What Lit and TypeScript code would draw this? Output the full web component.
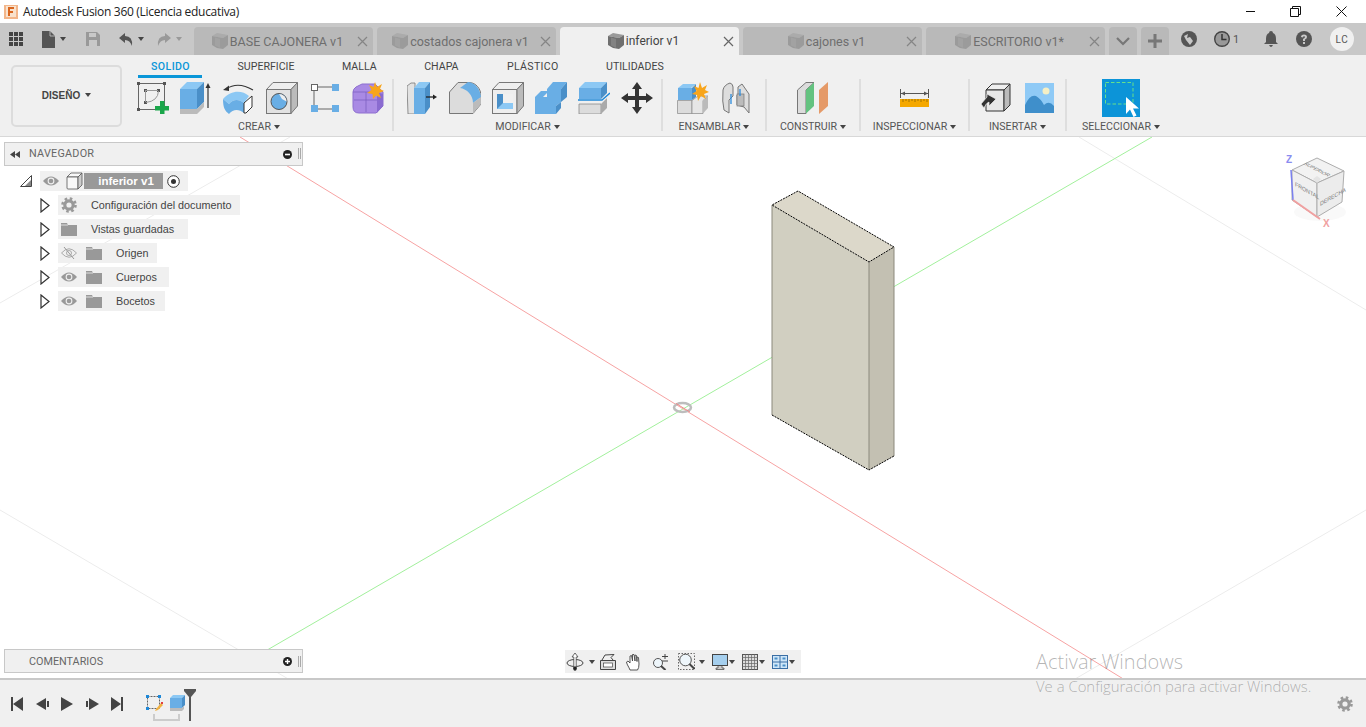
import { LitElement, html, css } from "lit";
import { customElement } from "lit/decorators.js";

const B1 = "#8cc8f4", B2 = "#69aee5", B3 = "#4a8fc8";

const gear = (s: number, c = "#999") => html`<svg width=${s} height=${s} viewBox="0 0 16 16"><circle cx="8" cy="8" r="4.2" fill="none" stroke=${c} stroke-width="3.2"/><circle cx="8" cy="8" r="6.5" fill="none" stroke=${c} stroke-width="2.6" stroke-dasharray="2.55 2.55"/></svg>`;
const eye = html`<svg width="16" height="12" viewBox="0 0 16 12"><path d="M0 6Q8-3 16 6Q8 15 0 6Z" fill="#999"/><circle cx="8" cy="6" r="3.4" fill="#f0f0f0"/><circle cx="8" cy="6" r="2.3" fill="#999"/></svg>`;
const eyeOff = html`<svg width="16" height="12" viewBox="0 0 16 12"><path d="M.5 6Q8-2.5 15.500 6Q8 14.500 .5 6Z" fill="none" stroke="#aaa"/><circle cx="8" cy="6" r="2.500" fill="none" stroke="#aaa"/><path d="M3 0L13 12" stroke="#999"/></svg>`;
const folder = html`<svg width="16" height="13" viewBox="0 0 16 13"><path d="M0 0H6L7 2H16V13H0Z" fill="#999"/><path d="M0 2H7" stroke="#f0f0f0" stroke-width=".8"/></svg>`;
const arrow = html`<svg width="10" height="15" viewBox="0 0 10 15"><path d="M1 1L9 7.500L1 14Z" fill="#fff" stroke="#333" stroke-width="1.200"/></svg>`;
const tabCube = (c: string, l: string) => html`<svg width="16" height="16" viewBox="0 0 16 16"><path d="M0 3L5 0L16 2L11 5Z" fill=${l}/><path d="M0 3L11 5V16L5 15L0 12Z" fill=${c}/><path d="M11 5L16 2V12L11 16Z" fill=${c}/><path d="M3 4.500V12.500L8 15V6Z" fill=${l} opacity=".45"/></svg>`;

const icons = {
  sketch: html`<svg width="32" height="32" viewBox="0 0 32 32"><rect x="1.500" y="1.500" width="26" height="26" fill="none" stroke="#666"/><g fill="#555"><rect width="3" height="3"/><rect x="26" width="3" height="3"/><rect y="26" width="3" height="3"/><rect x="7" y="7" width="3" height="3"/><rect x="20" y="7" width="3" height="3"/><rect x="7" y="19" width="3" height="3"/></g><path d="M8.500 8V20M9 8.500H21M21.500 9Q21 19 9 20.500" fill="none" stroke="#999"/><path d="M23 19h4.500v5h5v4.500h-5v4h-4.500v-4h-5V24h5z" fill="#1aa64a"/></svg>`,
  extrude: html`<svg width="32" height="32" viewBox="0 0 32 32"><path d="M0 7L7 0H24L17 7Z" fill=${B1}/><rect y="7" width="17" height="20" fill=${B2}/><path d="M17 7L24 0V20L17 27Z" fill=${B3}/><path d="M0 27H17L24 20V25L17 32H0Z" fill="#bbb"/><path d="M28 26V4" stroke="#333" stroke-width="1.200"/><path d="M25.500 6L28 1L30.500 6Z" fill="#333"/></svg>`,
  revolve: html`<svg width="34" height="32" viewBox="0 0 34 32"><path d="M4 7Q16 -1 31 8" fill="none" stroke="#333" stroke-width="1.200"/><path d="M1 8L7 3.500L7 9Z" fill="#333"/><path d="M1 17C9 8 20 8 27 14L22 21C17 17 11 17 7 22Z" fill=${B1}/><path d="M1 17L7 22C11 17 17 17 22 21V31C17 27 11 27 7 32C3 29 1 26 1 17Z" fill=${B2}/><path d="M22 21L30 14V25L24 31H22Z" fill="#fff" stroke="#333"/></svg>`,
  hole: html`<svg width="32" height="32" viewBox="0 0 32 32"><path d="M.5 7.500L7 .5H31.500L25 7.500Z" fill="#eee" stroke="#777"/><rect x=".5" y="7.500" width="24.500" height="24" fill="#e2e2e2" stroke="#777"/><path d="M25 7.500L31.500 .5V24L25 31.500Z" fill="#bbb" stroke="#777"/><circle cx="13" cy="19.500" r="8" fill=${B2} stroke="#555"/><path d="M13 12A7.500 7.500 0 0 1 20.500 19.500L16 17Z" fill="#eee"/></svg>`,
  nodes: html`<svg width="28" height="30" viewBox="0 0 28 30"><path d="M6 4H22M3 7V23M6 26H22" stroke="#666" fill="none"/><rect x=".5" y="1.500" width="6" height="6" fill="#fff" stroke="#666"/><rect x="21" y="1" width="7" height="7" fill=${B2}/><rect y="22" width="7" height="7" fill=${B2}/><rect x="21" y="22" width="7" height="7" fill=${B2}/></svg>`,
  star: html`<svg width="32" height="32" viewBox="0 0 32 32"><path d="M1 10Q1 7 4 5L10 2H23L31 10V24L24 31H7Q1 31 1 25Z" fill="#a98ae4" stroke="#8d6fcf"/><path d="M2 18H25M14 10V30M1 10H24" stroke="#7d5fc0" fill="none" opacity=".8"/><path d="M25 10V31L31 24V12Z" fill="#8a6bd0"/><path d="M23 0L25 5L30 2L28 7L32 9L27 11L29 16L24 13.500L21 17L20.500 12L15 11L19.500 8L17 3L21.500 5Z" fill="#f8a51b"/></svg>`,
  press: html`<svg width="30" height="32" viewBox="0 0 30 32"><path d="M0 4L4 1H8V32H1Z" fill="#e2e2e2" stroke="#777" stroke-width=".8"/><path d="M7 6L12 0H23L18 6Z" fill=${B1}/><rect x="7" y="6" width="11" height="26" fill=${B2}/><path d="M18 6L23 0V25L18 32Z" fill=${B3}/><path d="M19 15H27" stroke="#222" stroke-width="1.300"/><path d="M26 12.500L30 15L26 17.500Z" fill="#222"/></svg>`,
  fillet: html`<svg width="32" height="32" viewBox="0 0 32 32"><path d="M.5 10L9 .5H20C27 .5 32 7 32 14V22L24 31.500H.5Z" fill="#dcdcdc" stroke="#777"/><path d="M11 6L19 0C27 1 31 7 32 15L24 21C24 13 18 7 11 6Z" fill=${B2}/><path d="M24 21L32 15V22L24 31.500Z" fill="#bbb"/></svg>`,
  shell: html`<svg width="32" height="32" viewBox="0 0 32 32"><path d="M.5 7.500L7 .5H31.500L25 7.500Z" fill="#eee" stroke="#777"/><rect x=".5" y="7.500" width="24.500" height="24" fill="#eee" stroke="#777"/><path d="M25 7.500L31.500 .5V24L25 31.500Z" fill="#bbb" stroke="#777"/><rect x="5" y="12" width="16" height="15" fill=${B1}/><path d="M5 12H11V21L5 27Z" fill=${B3}/><path d="M11 12H21V21H11Z" fill="#f0f0f0"/></svg>`,
  combine: html`<svg width="32" height="32" viewBox="0 0 32 32"><path d="M0 15L6 9H14L8 15Z" fill=${B2}/><path d="M12 7L18 0H32L26 7Z" fill=${B2}/><path d="M0 15H12V7H26V20L21 24V32H0Z" fill=${B2}/><path d="M26 7L32 0V15L26 20Z" fill=${B3}/><path d="M21 24L26 20V26L21 32Z" fill=${B3}/></svg>`,
  offset: html`<svg width="32" height="32" viewBox="0 0 32 32"><path d="M1 6L7 0H29L23 6Z" fill=${B1}/><rect x="1" y="6" width="22" height="11" fill=${B2}/><path d="M23 6L29 0V11L23 17Z" fill=${B3}/><path d="M0 18H24L32 11" fill="none" stroke="#1e88d8" stroke-width="1.400"/><path d="M1 22H23V32H1Z" fill="#dcdcdc" stroke="#888" stroke-width=".8"/><path d="M23 22L29 16V26L23 32Z" fill="#aaa"/></svg>`,
  move: html`<svg width="32" height="32" viewBox="0 0 32 32"><path d="M16 0L21 7H18V14H25V11L32 16L25 21V18H18V25H21L16 32L11 25H14V18H7V21L0 16L7 11V14H14V7H11Z" fill="#333"/></svg>`,
  comp: html`<svg width="32" height="32" viewBox="0 0 32 32"><path d="M1 6L6 2H19L14 6Z" fill=${B1}/><rect x="1" y="6" width="14" height="12" fill=${B2}/><path d="M15 6L19 2V15L15 18Z" fill=${B3}/><path d="M.5 18.500H15V31.500H.5Z" fill="#dcdcdc" stroke="#888" stroke-width=".7"/><path d="M15 18.500L21 14H31L26 18.500V31.500H15Z" fill="#e6e6e6" stroke="#888" stroke-width=".7"/><path d="M26 18.500L31 14V26L26 31.500Z" fill="#bbb"/><path d="M23 0L25 6L30 3L28 8L32 10L27 12L29 17L24 14L21 19L20 13L15 12L19.500 9L17 4L21.500 6Z" fill="#f8a51b"/></svg>`,
  joint: html`<svg width="28" height="32" viewBox="0 0 28 32"><path d="M1 8Q2 3 8 1Q11 2 11 5V14L7 18V31L2 28Q0 20 1 8Z" fill="#ddd" stroke="#777"/><path d="M27 12L20 2L16 5V13H15V23L22 25L27 31Z" fill="#ddd" stroke="#777"/><rect x="15" y="12" width="7" height="12" fill="#bbb" stroke="#777" stroke-width=".7"/><path d="M9 12V22M18 7V14" stroke="#2b8cdc" stroke-width="1.300"/></svg>`,
  plane: html`<svg width="32" height="32" viewBox="0 0 32 32"><path d="M.5 8L9 .5H17L9 8V31.500H.5Z" fill="#dcdcdc" stroke="#777"/><path d="M9 8L17 .5V24L9 31.500Z" fill="#63c27f"/><path d="M22 8L31 0V24L22 32Z" fill="#e59a68"/></svg>`,
  measure: html`<svg width="29" height="18" viewBox="0 0 29 18"><path d="M.5 0V9M28.500 0V9M1 4.500H28" stroke="#555"/><path d="M1 4.500L5 2.500V6.500ZM28 4.500L24 2.500V6.500Z" fill="#555"/><rect y="10" width="29" height="8" fill="#f5a800"/><path d="M3 10v3M6 10v2M9 10v3M12 10v2M15 10v3M18 10v2M21 10v3M24 10v2M27 10v3" stroke="#805c00" stroke-width=".7"/></svg>`,
  insert: html`<svg width="30" height="30" viewBox="0 0 30 30"><path d="M5 7L11 1H29L23 7Z" fill="#eee" stroke="#333"/><path d="M5 7H23V28H5Z" fill="#e8e8e8" stroke="#333"/><path d="M23 7L29 1V22L23 28Z" fill="#bbb" stroke="#333"/><path d="M0 21L6 14V11L15 16L8 23V19Q5 20 3 25Z" fill="#333" stroke="#eee" stroke-width=".7"/></svg>`,
  image: html`<svg width="29" height="30" viewBox="0 0 29 30"><rect width="29" height="30" fill="#8fcaf6"/><circle cx="21" cy="8" r="3.500" fill="#f5efc5"/><path d="M0 22Q5 11 11 13Q16 16 19 22Q24 17 29 23V30H0Z" fill="#3f8fcb"/></svg>`,
  select: html`<svg width="38" height="38" viewBox="0 0 38 38"><rect width="38" height="38" fill="#0c94d8"/><rect x="3.500" y="3.500" width="27.500" height="21.500" fill="none" stroke="#67e08a" stroke-dasharray="3.500 2"/><path d="M24 18V35L28 30.500L31.500 38L34.500 36.500L31 29.500L37 29.500Z" fill="#fff"/></svg>`,
};

const navIcons = {
  orbit: html`<svg width="18" height="18" viewBox="0 0 18 18"><ellipse cx="9" cy="10" rx="8" ry="3.500" fill="none" stroke="#444"/><path d="M9 0L12 4H10.200V17H7.800V4H6Z" fill="#fff" stroke="#444" stroke-width=".8"/><path d="M9 13L11 15L9 18L7 15Z" fill="#222"/></svg>`,
  look: html`<svg width="16" height="16" viewBox="0 0 16 16"><path d="M.5 6.500H15.500V15.500H.5Z" fill="#ddd" stroke="#444"/><rect x="3.500" y="9" width="9" height="4" fill="#fff" stroke="#444" stroke-width=".7"/><path d="M2 6L5 1L14 .5L11 3.500L13 6" fill="none" stroke="#444"/></svg>`,
  hand: html`<svg width="16" height="18" viewBox="0 0 16 18"><path d="M4 17C3 14 1 12 .5 9L2 8L4 10V3L5.500 2.500L6.500 8V1.500H8L9 8V2L10.500 2.500L11 8.500V4L12.500 4.500L13 11Q13 15 11.500 17Z" fill="#fff" stroke="#444" stroke-width=".9"/></svg>`,
  zoom: html`<svg width="16" height="16" viewBox="0 0 16 16"><circle cx="6" cy="9" r="4.500" fill="#eef6fb" stroke="#555"/><path d="M9 12L13.500 16" stroke="#444" stroke-width="2"/><path d="M10 2.500H16M13 0V5M10 7H16" stroke="#444"/></svg>`,
  fit: html`<svg width="17" height="17" viewBox="0 0 17 17"><rect x=".5" y=".5" width="16" height="16" fill="none" stroke="#666" stroke-dasharray="1.500 1.500"/><circle cx="7.500" cy="7" r="5.800" fill="#eef6fb" stroke="#555"/><path d="M11.500 11L16.500 16" stroke="#444" stroke-width="2"/></svg>`,
  display: html`<svg width="16" height="16" viewBox="0 0 16 16"><rect x=".5" y=".5" width="15" height="11" fill="#a5cfee" stroke="#444"/><path d="M6 12V14H4V15.500H12V14H10V12" fill="#ccc" stroke="#444" stroke-width=".7"/></svg>`,
  grid: html`<svg width="16" height="16" viewBox="0 0 16 16"><rect x=".5" y=".5" width="15" height="15" fill="#ddd" stroke="#555"/><path d="M3.500 0V16M6.500 0V16M9.500 0V16M12.500 0V16M0 3.500H16M0 6.500H16M0 9.500H16M0 12.500H16" stroke="#666" stroke-width=".7"/></svg>`,
  views: html`<svg width="16" height="14" viewBox="0 0 16 14"><rect x=".5" y=".5" width="15" height="13" fill="#cfe6f8" stroke="#3a6ea5"/><path d="M8 0V14M0 7H16" stroke="#3a6ea5"/><path d="M2.500 3.500H5.500M10.500 3.500H13.500M2.500 10.500H5.500M10.500 10.500H13.500" stroke=${B3} stroke-width="2"/></svg>`,
};

@customElement("app-root")
export class AppRoot extends LitElement {
  static styles = css`
    :host { display: block; width: 1366px; height: 727px; overflow: hidden; }
    * { box-sizing: border-box; }
    svg { display: block; flex: none; }
    .app { position: relative; display: flex; flex-direction: column; width: 1366px; height: 727px; background: #fff; font-family: Roboto, "Liberation Sans", sans-serif; color: #444; }
    .caret { flex: none; width: 0; height: 0; border-left: 3.5px solid transparent; border-right: 3.5px solid transparent; border-top: 4px solid #444; }
    .caret.l { border-top-color: #999; }

    .title { display: flex; align-items: center; height: 23px; flex: none; padding-left: 4px; background: #fff; }
    .title .t { margin-left: 5px; font-size: 12px; color: #222; font-family: "Open Sans", sans-serif; letter-spacing: -.3px; white-space: nowrap; }
    .win { margin-left: auto; display: flex; padding-right: 2px; }
    .win div { width: 45.500px; display: flex; justify-content: center; }

    .tabbar { display: flex; height: 32px; flex: none; background: #c8c8c8; align-items: flex-end; }
    .tools { width: 194px; height: 32px; flex: none; display: flex; align-items: center; padding-left: 9px; }
    .tabs { display: flex; gap: 4px; }
    .tab { width: 179px; height: 28px; display: flex; align-items: center; background: #b9b9b9; border-radius: 4px 4px 0 0; padding: 0 5px 0 4px; font-size: 12.500px; color: #6e6e6e; }
    .tab.on { background: #f0f0f0; color: #444; font-size: 12px; }
    .tab .lab { flex: 1; display: flex; align-items: center; justify-content: center; gap: 2px; white-space: nowrap; }
    .tab .x { width: 11px; height: 11px; flex: none; }
    .mini { height: 28px; width: 28px; flex: none; background: #b9b9b9; border-radius: 4px 4px 0 0; display: flex; align-items: center; justify-content: center; }
    .tstatus { display: flex; align-items: center; height: 32px; margin-left: 12px; flex: 1; padding-right: 12px; }

    .toolbar { display: flex; height: 82px; flex: none; background: #f0f0f0; border-bottom: 1px solid #d8d8d8; padding-left: 11px; }
    .design { width: 111px; height: 62px; margin-top: 10px; padding-bottom: 2px; flex: none; border: 2px solid #dcdcdc; border-radius: 5px; display: flex; align-items: center; justify-content: center; gap: 5px; font: bold 10px "Liberation Sans", sans-serif; color: #444; }
    .rib { margin-left: 4px; display: flex; flex-direction: column; }
    .rtabs { display: flex; flex: none; gap: 47.500px; padding: 6px 0 0 25px; height: 24px; font-size: 10.600px; color: #444; line-height: 12px; }
    .rtabs span { position: relative; white-space: nowrap; }
    .rtabs .on { color: #0a96d8; font-weight: 500; letter-spacing: .4px; }
    .rtabs .on::after { content: ""; position: absolute; left: -13px; right: -12px; top: 14px; height: 3px; background: #0a96d8; }
    .rtabs .pl { margin-left: 1px; letter-spacing: .3px; }
    .groups { display: flex; height: 57px; flex: none; }
    .grp { display: flex; flex-direction: column; align-items: center; height: 57px; }
    .grp::after { content: none; }
    .sep { border-right: 2px solid #dedede; height: 52px; }
    .irow { display: flex; align-items: center; height: 38px; flex: none; }
    .irow.s1 { padding-left: 2px; }
    .irow.s2 { padding-left: 4px; }
    .cell { width: 43px; display: flex; justify-content: center; }
    .glab { display: flex; align-items: center; gap: 3px; margin-top: 4px; height: 12px; flex: none; font-size: 10.600px; line-height: 12px; color: #555; white-space: nowrap; }

    .canvas { position: relative; flex: 1; display: flex; flex-direction: column; justify-content: space-between; padding: 5px 0 5px 4px; overflow: hidden; }
    .scene { position: absolute; left: 0; top: 0; }
    .top, .panel { position: relative; }
    .panel { width: 299px; height: 24px; display: flex; align-items: center; background: #f0f0f0; border: 1px solid #c8c8c8; font-size: 10.800px; color: #666; padding-left: 24px; }
    .panel.nav { letter-spacing: .25px; padding-bottom: 2px; }
    .panel .rw { position: absolute; left: 5px; top: 8px; }
    .panel .sign { margin-left: auto; margin-right: 6px; }
    .panel.nav .sign { margin-top: 2px; }
    .panel .grip { width: 3px; height: 11px; border: 1px solid #aaa; border-top: none; border-bottom: none; margin-right: 1px; background: #f0f0f0; }

    .tree { display: flex; flex-direction: column; gap: 4px; margin-top: 5px; align-items: flex-start; }
    .rroot { display: flex; align-items: center; margin-left: 16px; height: 20px; }
    .rootchip { display: flex; align-items: center; height: 20px; width: 148px; margin-left: 8px; background: #f0f0f0; padding-left: 3px; }
    .comp { display: flex; align-items: center; width: 98px; height: 16px; margin-left: 6px; background: #999; }
    .comp .box { width: 19px; height: 20px; display: flex; align-items: center; justify-content: center; flex: none; background: #f0f0f0; }
    .comp .nm { flex: 1; text-align: center; padding-left: 5px; color: #fff; font: bold 11.500px "Liberation Sans", sans-serif; }
    .rootchip .rad { margin-left: 4px; }
    .row { display: flex; align-items: center; height: 20px; margin-left: 36px; }
    .chip { display: flex; align-items: center; height: 20px; margin-left: 8px; background: #f0f0f0; padding: 0 0 0 3px; font: 10.800px "Liberation Sans", sans-serif; color: #444; }
    .chip .ic { width: 16px; display: flex; justify-content: center; flex: none; }
    .chip .ic + .ic { margin-left: 9px; }
    .chip .tx { margin-left: 14px; white-space: nowrap; }

    .navbar { position: absolute; left: 565px; bottom: 5px; width: 236px; height: 23px; background: #f0f0f0; display: flex; align-items: center; padding-left: 1px; }
    .navbar .n { display: flex; align-items: center; }
    .ml1 { margin-left: 1px; } .ml4 { margin-left: 4px; } .ml5 { margin-left: 5px; } .ml7 { margin-left: 7px; } .ml10 { margin-left: 10px; }

    .bottom { height: 49px; flex: none; background: #f0f0f0; border-top: 2px solid #c8c8c8; display: flex; align-items: flex-start; padding-left: 11px; }
    .play { display: flex; align-items: center; gap: 12.500px; margin-top: 17px; }
    .tl { margin-left: 23px; margin-top: 9px; }
    .bottom .cog { margin-left: auto; margin-right: 13px; margin-top: 16px; }

    .wm { position: absolute; left: 1036px; top: 649px; color: rgba(90,90,90,.45); font-family: "Open Sans", sans-serif; font-weight: 300; pointer-events: none; white-space: nowrap; }
    .wm .a { font-size: 20px; line-height: 26px; }
    .wm .b { font-size: 14.900px; line-height: 20px; margin-top: 1px; }
  `;

  tab(name: string, on = false) {
    return html`<div class="tab ${on ? "on" : ""}"><div class="lab">${on ? tabCube("#6f6f6f", "#9a9a9a") : tabCube("#9b9b9b", "#ababab")}<span>${name}</span></div>
      <svg class="x" viewBox="0 0 11 11"><path d="M1 1L10 10M10 1L1 10" stroke=${on ? "#666" : "#858585"} stroke-width="1.200"/></svg></div>`;
  }

  group(width: number, label: string, items: unknown[], shift = "", last = false) {
    return html`<div class="${last ? "" : "sep"}" style="width:${width}px"><div class="grp"><div class="irow ${shift}">${items.map((i) => html`<div class="cell">${i}</div>`)}</div><div class="glab">${label}<span class="caret"></span></div></div></div>`;
  }

  row(label: string, width: number, iconsList: unknown[]) {
    return html`<div class="row">${arrow}<div class="chip" style="width:${width}px">${iconsList.map((i) => html`<span class="ic">${i}</span>`)}<span class="tx">${label}</span></div></div>`;
  }

  render() {
    return html`<div class="app">
      <div class="title">
        <svg width="14" height="14" viewBox="0 0 14 14"><rect width="14" height="14" fill="#f3b68a"/><rect x="2" y="1" width="10" height="11" fill="#f9e2cd"/><path d="M4 2H10V4H6V6H9V8H6V11H4Z" fill="#d9661f"/></svg>
        <span class="t">Autodesk Fusion 360 (Licencia educativa)</span>
        <div class="win">
          <div><svg width="11" height="11" viewBox="0 0 11 11"><path d="M1 5.500H10" stroke="#111"/></svg></div>
          <div><svg width="11" height="11" viewBox="0 0 11 11"><path d="M.5 2.500H8.500V10.500H.5ZM2.500 2.500V.5H10.500V8.500H8.500" fill="none" stroke="#111"/></svg></div>
          <div><svg width="11" height="11" viewBox="0 0 11 11"><path d="M.5 .5L10.500 10.500M10.500 .5L.5 10.500" stroke="#111"/></svg></div>
        </div>
      </div>

      <div class="tabbar">
        <div class="tools">
          <svg width="14" height="14" viewBox="0 0 14 14" fill="#444"><rect width="4" height="4"/><rect x="5" width="4" height="4"/><rect x="10" width="4" height="4"/><rect y="5" width="4" height="4"/><rect x="5" y="5" width="4" height="4"/><rect x="10" y="5" width="4" height="4"/><rect y="10" width="4" height="4"/><rect x="5" y="10" width="4" height="4"/><rect x="10" y="10" width="4" height="4"/></svg>
          <svg style="margin-left:19px" width="13" height="17" viewBox="0 0 13 17"><path d="M0 0H8L13 5V17H0Z" fill="#555"/><path d="M8 0V5H13" fill="none" stroke="#c8c8c8" stroke-width=".8"/></svg>
          <span class="caret ml5"></span>
          <svg style="margin-left:20px" width="14" height="14" viewBox="0 0 14 14"><path d="M0 0H11L14 3V14H0Z" fill="#999"/><rect x="3" y="1" width="7" height="4" fill="#c8c8c8"/><rect x="3" y="8" width="8" height="6" fill="#c8c8c8"/></svg>
          <svg style="margin-left:19px" width="14" height="13" viewBox="0 0 14 13"><path d="M6 0V3Q14 3 13 13Q11 7 6 7V10L0 5Z" fill="#555"/></svg>
          <span class="caret ml5"></span>
          <svg style="margin-left:13px" width="14" height="13" viewBox="0 0 14 13"><path d="M8 0V3Q0 3 1 13Q3 7 8 7V10L14 5Z" fill="#999"/></svg>
          <span class="caret l ml5"></span>
        </div>
        <div class="tabs">
          ${this.tab("BASE CAJONERA v1")}${this.tab("costados cajonera v1")}${this.tab("inferior v1", true)}${this.tab("cajones v1")}${this.tab("ESCRITORIO v1*")}
          <div class="mini"><svg width="14" height="9" viewBox="0 0 14 9"><path d="M1 1L7 7L13 1" fill="none" stroke="#777" stroke-width="2.200"/></svg></div>
          <div class="mini"><svg width="14" height="14" viewBox="0 0 14 14"><path d="M7 0V14M0 7H14" stroke="#777" stroke-width="3"/></svg></div>
        </div>
        <div class="tstatus">
          <svg width="16" height="16" viewBox="0 0 16 16"><circle cx="8" cy="8" r="8" fill="#555"/><path d="M3 5L7 3L6 7L9 6L12 10L9 14L5 9Z" fill="#c8c8c8"/></svg>
          <svg style="margin-left:17px" width="16" height="16" viewBox="0 0 16 16"><circle cx="8" cy="8" r="7.300" fill="#999" stroke="#444" stroke-width="1.400"/><path d="M8 3V8.500H12.500" fill="none" stroke="#333" stroke-width="1.500"/></svg>
          <span style="font-size:11px;color:#555;margin-left:3px;width:31px">1</span>
          <svg width="14" height="16" viewBox="0 0 14 16"><path d="M7 0Q9 0 9 2Q12 3 12 8V11L14 13H0L2 11V8Q2 3 5 2Q5 0 7 0ZM5 14H9Q8 16 7 16Q6 16 5 14Z" fill="#555"/></svg>
          <svg style="margin-left:18px" width="16" height="16" viewBox="0 0 16 16"><circle cx="8" cy="8" r="8" fill="#555"/><path d="M5 6Q5 3.500 8 3.500Q11 3.500 11 6Q11 7.500 9 8.500V10H7V8Q9 7 9 6Q9 5.300 8 5.300Q7 5.300 7 6.500Z" fill="#c8c8c8"/><rect x="7" y="11" width="2" height="2" fill="#c8c8c8"/></svg>
          <span style="margin-left:18px;width:24px;height:24px;border-radius:50%;background:#f0f0f0;display:flex;align-items:center;justify-content:center;font-size:10px;letter-spacing:.6px;color:#555">LC</span>
        </div>
      </div>

      <div class="toolbar">
        <div class="design">DISEÑO <span class="caret"></span></div>
        <div class="rib">
          <div class="rtabs"><span class="on">SOLIDO</span><span>SUPERFICIE</span><span>MALLA</span><span>CHAPA</span><span class="pl">PLÁSTICO</span><span>UTILIDADES</span></div>
          <div class="groups">
            ${this.group(268, "CREAR", [icons.sketch, icons.extrude, icons.revolve, icons.hole, icons.nodes, icons.star], "s1")}
            ${this.group(269, "MODIFICAR", [icons.press, icons.fillet, icons.shell, icons.combine, icons.offset, icons.move], "s2")}
            ${this.group(104, "ENSAMBLAR", [icons.comp, icons.joint])}
            ${this.group(94, "CONSTRUIR", [icons.plane])}
            ${this.group(109, "INSPECCIONAR", [icons.measure])}
            ${this.group(97, "INSERTAR", [icons.insert, icons.image])}
            ${this.group(108, "SELECCIONAR", [icons.select], "", true)}
          </div>
        </div>
      </div>

      <div class="canvas">
        <svg class="scene" width="1366" height="542" viewBox="0 137 1366 542">
          <g stroke="#ececec" fill="none"><path d="M0 303L290 137M0 510L290 680M1079 137L1366 310M1075 679L1366 510"/></g>
          <path d="M240 137L1125 680" stroke="#f7a3a3"/>
          <path d="M1152 137L250 660" stroke="#a2f09c"/>
          <ellipse cx="682.500" cy="407.500" rx="8.500" ry="4.500" fill="none" stroke="#bdbdbd" stroke-width="2.500"/>
          <path d="M676 403.500L690 412" stroke="#f08a8a"/>
          <polygon points="798,191 772,205 869,262 894,247" fill="#dcd8ca"/>
          <polygon points="772,205 869,262 869,470 772,415" fill="#d1cfc1"/>
          <polygon points="869,262 894,247 894,456 869,470" fill="#c3c0b2"/>
          <path d="M772 205V415M869 262V470M894 247V456" fill="none" stroke="#8b897d"/>
          <path d="M798 191L772 205L869 262L894 247L798 191M772 415L869 470L894 456" fill="none" stroke="#000" stroke-dasharray="2 1"/>
          <g>
            <ellipse cx="1320" cy="212" rx="26" ry="9" fill="#eee" opacity=".35"/>
            <polygon points="1317,158 1292,170 1317,183 1344,171" fill="#f2f2f2" stroke="#adadad"/>
            <polygon points="1292,170 1317,183 1317,217 1292,200" fill="#f0f0f0" stroke="#adadad"/>
            <polygon points="1317,183 1344,171 1342,202 1317,217" fill="#ececec" stroke="#adadad"/>
            <polygon points="1317,176 1321,179 1317,183 1313,179" fill="#e4e4e4"/>
            <path d="M1291 170L1293 200" stroke="#7a80ee" stroke-width="1.500"/>
            <path d="M1293 200L1320 219" stroke="#f0a0a0" stroke-width="2"/>
            <g fill="#777" font-family="'Liberation Sans',sans-serif" font-size="6">
              <text transform="matrix(.88 .5 0 1 1295 186)">FRONTAL</text>
              <text transform="matrix(.88 -.5 0 1 1320 206)">DERECHA</text>
              <text font-size="5.500" transform="matrix(.86 .44 -.86 .44 1303 164)">SUPERIOR</text>
            </g>
            <text x="1286" y="163" font-size="10" font-weight="bold" fill="#8a8cf0" font-family="'Liberation Sans',sans-serif">Z</text>
            <text x="1323" y="227" font-size="10" font-weight="bold" fill="#f0a0a0" font-family="'Liberation Sans',sans-serif">X</text>
          </g>
        </svg>

        <div class="top">
          <div class="panel nav">
            <svg class="rw" width="10" height="7" viewBox="0 0 10 7"><path d="M5 0V7L0 3.500ZM10 0V7L5 3.500Z" fill="#444"/></svg>
            NAVEGADOR
            <svg class="sign" width="9" height="9" viewBox="0 0 9 9"><circle cx="4.500" cy="4.500" r="4.500" fill="#222"/><rect x="2" y="3.700" width="5" height="1.600" fill="#fff"/></svg>
            <div class="grip"></div>
          </div>
          <div class="tree">
            <div class="rroot">
              <svg width="12" height="12" viewBox="0 0 12 12"><path d="M.5 11.500L11.500 .5V11.500Z" fill="#fff" stroke="#444"/><path d="M5 11L11 5V11Z" fill="#888"/></svg>
              <div class="rootchip">${eye}
                <div class="comp"><div class="box"><svg width="17" height="18" viewBox="0 0 17 18"><path d="M1 5L5 1H16L12 5Z" fill="#f8f8f8" stroke="#555" stroke-width=".8"/><path d="M1 5H12V17H2Q1 17 1 16Z" fill="#f8f8f8" stroke="#555" stroke-width=".8"/><path d="M12 5L16 1V13L12 17Z" fill="#ccc" stroke="#555" stroke-width=".8"/></svg></div><span class="nm">inferior v1</span></div>
                <svg class="rad" width="13" height="13" viewBox="0 0 13 13"><circle cx="6.500" cy="6.500" r="5.800" fill="#fff" stroke="#333"/><circle cx="6.500" cy="6.500" r="2.500" fill="#333"/></svg>
              </div>
            </div>
            ${this.row("Configuración del documento", 182, [gear(16)])}
            ${this.row("Vistas guardadas", 130, [folder])}
            ${this.row("Origen", 99, [eyeOff, folder])}
            ${this.row("Cuerpos", 111, [eye, folder])}
            ${this.row("Bocetos", 107, [eye, folder])}
          </div>
        </div>

        <div class="navbar">
          <span class="n">${navIcons.orbit}<span class="caret ml5"></span></span>
          <span class="n ml5">${navIcons.look}</span>
          <span class="n ml10">${navIcons.hand}</span>
          <span class="n ml10">${navIcons.zoom}</span>
          <span class="n ml10">${navIcons.fit}<span class="caret ml4"></span></span>
          <span class="n ml7">${navIcons.display}<span class="caret ml1"></span></span>
          <span class="n ml7">${navIcons.grid}<span class="caret ml1"></span></span>
          <span class="n ml7">${navIcons.views}<span class="caret ml1"></span></span>
        </div>

        <div class="panel">
          COMENTARIOS
          <svg class="sign" width="9" height="9" viewBox="0 0 9 9"><circle cx="4.500" cy="4.500" r="4.500" fill="#222"/><path d="M2 4.500H7M4.500 2V7" stroke="#fff" stroke-width="1.400"/></svg>
          <div class="grip"></div>
        </div>
      </div>

      <div class="bottom">
        <div class="play">
          <svg width="12" height="14" viewBox="0 0 12 14" fill="#444"><rect width="2" height="14"/><path d="M12 0V14L2 7Z"/></svg>
          <svg width="13" height="12" viewBox="0 0 13 12" fill="#444"><path d="M10 0V12L0 6Z"/><rect x="11" y="3" width="2" height="6"/></svg>
          <svg width="12" height="14" viewBox="0 0 12 14" fill="#444"><path d="M0 0V14L12 7Z"/></svg>
          <svg width="13" height="12" viewBox="0 0 13 12" fill="#444"><rect y="3" width="2" height="6"/><path d="M3 0V12L13 6Z"/></svg>
          <svg width="12" height="14" viewBox="0 0 12 14" fill="#444"><rect x="10" width="2" height="14"/><path d="M0 0V14L10 7Z"/></svg>
        </div>
        <svg class="tl" width="54" height="34" viewBox="0 0 54 34">
          <g transform="translate(0 6)">
            <rect x="1.500" y="1.500" width="12" height="12" fill="none" stroke="#666" stroke-dasharray="2 1"/>
            <g fill="#1e88d8"><rect width="3" height="3"/><rect x="12" width="3" height="3"/><rect y="12" width="3" height="3"/></g>
            <path d="M10 14L15 8L17 10L12 15L9 16Z" fill="#f0b040"/><rect x="15" y="7" width="2" height="2" fill="#e04040"/>
            <path d="M24 3L27 0H39L36 3Z" fill=${B1}/><rect x="24" y="3" width="12" height="10" fill=${B2}/><path d="M36 3L39 0V10L36 13Z" fill=${B3}/><path d="M24 13H36L38 11V14L36 16H24Z" fill="#bbb"/>
          </g>
          <path d="M8 25V31H33V25" fill="none" stroke="#ccc" stroke-width="2"/>
          <path d="M38 0H50V2L45 8H43L38 2Z" fill="#555"/><rect x="43" y="6" width="2" height="26" fill="#555"/>
        </svg>
        <div class="cog">${gear(16)}</div>
      </div>

      <div class="wm"><div class="a">Activar Windows</div><div class="b">Ve a Configuración para activar Windows.</div></div>
    </div>`;
  }
}
